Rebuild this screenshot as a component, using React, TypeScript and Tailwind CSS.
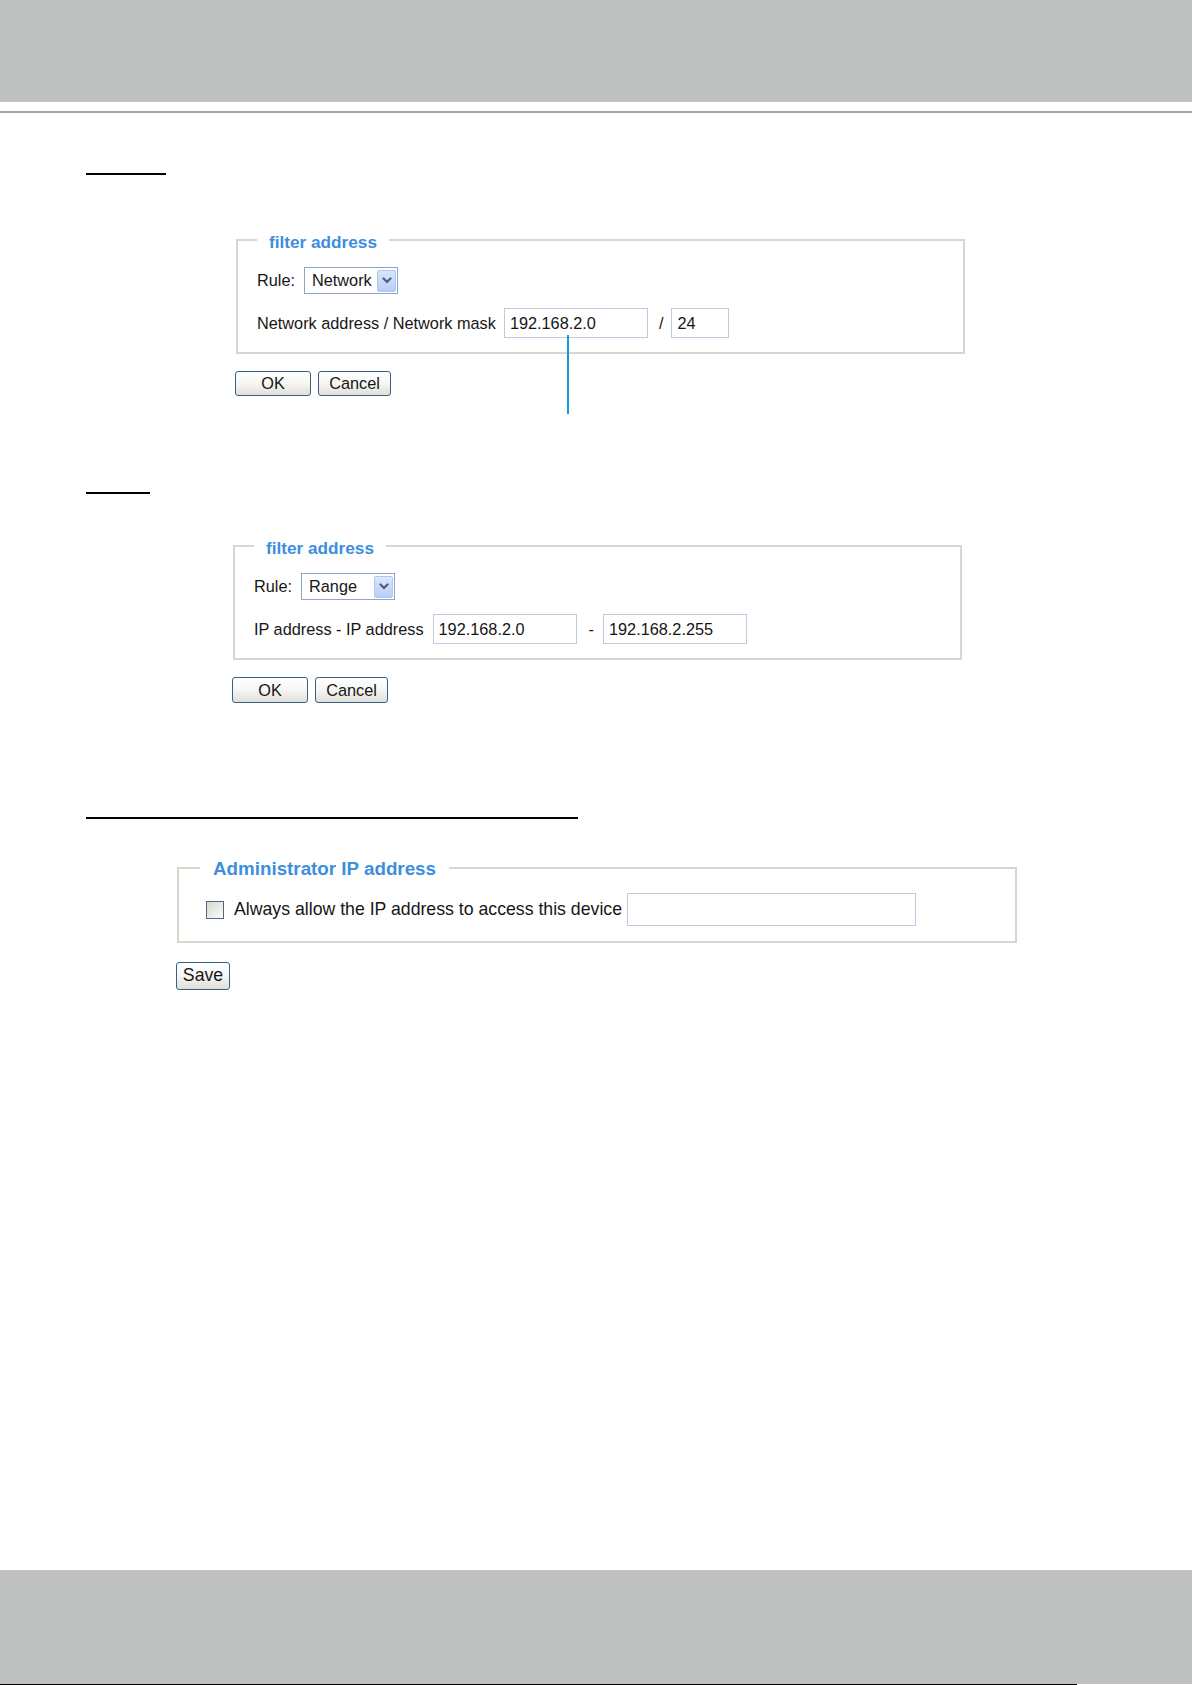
import type { ReactNode } from "react";

const font = { fontFamily: '"Liberation Sans", Arial, sans-serif' };

const Chevron = () => (
  <svg width="10" height="7" viewBox="0 0 10 7" aria-hidden="true">
    <path
      d="M1.5 1.5 L5 5 L8.5 1.5"
      fill="none"
      stroke="#4d6185"
      strokeWidth="2.2"
      strokeLinecap="round"
      strokeLinejoin="round"
    />
  </svg>
);

const FakeSelect = ({ value }: { value: string }) => (
  <div
    role="combobox"
    className="flex h-[27px] w-[94px] items-center justify-between border border-[#8ea6c6] bg-white pl-[7px] pr-[1px]"
  >
    <span className="text-[16.3px] leading-none text-[#161616]">{value}</span>
    <span className="grid h-[22px] w-[19px] place-items-center rounded-[2px] border border-[#b3c6ee] bg-linear-to-b from-[#dbe6fc] to-[#b9cdf5]">
      <Chevron />
    </span>
  </div>
);

const TextBox = ({
  value,
  width,
  height = 30,
}: {
  value?: string;
  width: string;
  height?: number;
}) => (
  <div
    className={`flex items-center border border-[#bccbdf] bg-white pl-[5px] text-[16.3px] leading-none text-[#161616] ${width} ${
      height === 33 ? "h-[33px]" : "h-[30px]"
    }`}
  >
    {value}
  </div>
);

const Button = ({
  children,
  className,
}: {
  children: ReactNode;
  className: string;
}) => (
  <button
    type="button"
    className={`grid place-items-center rounded-[3px] border border-[#3a5f86] bg-linear-to-b from-white via-[#f6f6f3] to-[#e0dfd8] leading-none text-[#161616] ${className}`}
  >
    {children}
  </button>
);

const FilterBox = ({
  select,
  children,
  className,
}: {
  select: string;
  children: ReactNode;
  className: string;
}) => (
  <fieldset className={`border-2 border-[#d9d6ce] ${className}`}>
    <legend className="ml-[19px] px-[12px] pt-[4px] text-[17.2px] font-bold leading-[20px] text-[#3d8ede]">
      filter address
    </legend>
    <div className="flex flex-col gap-[14px] pl-[19px] pt-[15px] pb-[14px] text-[16.3px] leading-none text-[#161616]">
      <div className="flex items-center gap-[9px]">
        <span>Rule:</span>
        <FakeSelect value={select} />
      </div>
      <div className="flex items-center">{children}</div>
    </div>
  </fieldset>
);

export default function App() {
  return (
    <div style={font} className="relative flex h-[1685px] w-[1192px] flex-col bg-white">
      <header className="h-[102px] bg-[#bfc1c0]" />
      <div className="mt-[9px] h-[2px] bg-[#a3a3a3]" />

      {/* network rule */}
      <div className="ml-[86px] mt-[60px] h-[2px] w-[80px] bg-black" />
      <FilterBox select="Network" className="ml-[236px] mt-[53px] w-[729px]">
        <span>Network address / Network mask</span>
        <div className="ml-[8px]">
          <TextBox value="192.168.2.0" width="w-[144px]" />
        </div>
        <span className="ml-[11px]">/</span>
        <div className="ml-[8px]">
          <TextBox value="24" width="w-[58px]" />
        </div>
      </FilterBox>
      <div className="ml-[235px] mt-[17px] flex gap-[7px]">
        <Button className="h-[25px] w-[76px] text-[16.3px]">OK</Button>
        <Button className="h-[25px] w-[73px] text-[16.3px]">Cancel</Button>
      </div>

      {/* range rule */}
      <div className="ml-[86px] mt-[96px] h-[2px] w-[64px] bg-black" />
      <FilterBox select="Range" className="ml-[233px] mt-[40px] w-[729px]">
        <span>IP address - IP address</span>
        <div className="ml-[9px]">
          <TextBox value="192.168.2.0" width="w-[144px]" />
        </div>
        <span className="ml-[12px]">-</span>
        <div className="ml-[9px]">
          <TextBox value="192.168.2.255" width="w-[144px]" />
        </div>
      </FilterBox>
      <div className="ml-[232px] mt-[17px] flex gap-[7px]">
        <Button className="h-[26px] w-[76px] text-[16.3px]">OK</Button>
        <Button className="h-[26px] w-[73px] text-[16.3px]">Cancel</Button>
      </div>

      {/* administrator */}
      <div className="ml-[86px] mt-[114px] h-[2px] w-[492px] bg-black" />
      <fieldset className="ml-[177px] mt-[36px] w-[840px] border-2 border-[#d9d6ce]">
        <legend className="ml-[21px] px-[13px] pt-[3px] text-[18.8px] font-bold leading-[22px] text-[#3d8ede]">
          Administrator IP address
        </legend>
        <div className="flex items-center pl-[27px] pt-[13px] pb-[15px] text-[17.7px] leading-none text-[#161616]">
          <span className="h-[18px] w-[18px] border border-[#4d6784] bg-linear-to-br from-[#d8d8d2] to-[#fbfbfa]" />
          <span className="ml-[10px]">Always allow the IP address to access this device</span>
          <div className="ml-[5px]">
            <TextBox width="w-[289px]" height={33} />
          </div>
        </div>
      </fieldset>
      <Button className="ml-[176px] mt-[19px] h-[28px] w-[54px] text-[17.7px]">Save</Button>

      <footer className="mt-auto">
        <div className="h-[114px] bg-[#bfc1c0]" />
        <div className="h-[1px] w-[1077px] bg-black" />
      </footer>

      {/* callout line */}
      <div className="absolute left-[567px] top-[335px] h-[79px] w-[2px] bg-[#1b9ad8]" />
    </div>
  );
}
